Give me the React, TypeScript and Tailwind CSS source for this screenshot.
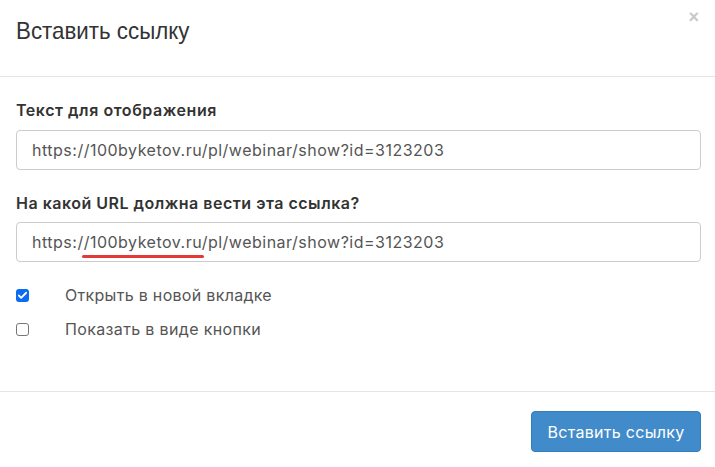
import { Check } from "lucide-react";

const url = "https://100byketov.ru/pl/webinar/show?id=3123203";

export default function App() {
  return (
    <div className="h-[467px] w-[715px] overflow-hidden bg-white text-[#333] [font-family:Inter,'Noto_Sans',sans-serif]">
      <header className="relative h-[77px] border-b border-[#e5e5e5] px-4 pt-[16px]">
        <h1 className="origin-left scale-x-[0.93] text-[24px] leading-[30px] text-[#333] [font-family:'Liberation_Sans',Arial,sans-serif]">
          Вставить ссылку
        </h1>
        <span className="absolute right-[16px] top-[8px] text-[18px] font-bold leading-none text-[#c8c8c8] [font-family:'Liberation_Sans',Arial,sans-serif]">
          ×
        </span>
      </header>

      <main className="h-[315px] border-b border-[#e5e5e5] px-4 pt-[22px]">
        <label className="block text-[16px] font-semibold leading-[22px] tracking-[0.55px] text-[#333]">
          Текст для отображения
        </label>
        <div className="mt-[9px] flex h-[40px] w-[685px] items-center rounded-[4px] border border-[#ccc] px-[15px] text-[16px] tracking-[0.5px] text-[#555]">
          {url}
        </div>

        <label className="mt-[22px] block text-[16px] font-semibold leading-[22px] tracking-[0.5px] text-[#333]">
          На какой URL должна вести эта ссылка?
        </label>
        <div className="mt-[8px] flex h-[40px] w-[685px] items-center rounded-[4px] border border-[#ccc] px-[15px] text-[16px] tracking-[0.5px] text-[#555]">
          <span>https:/</span>
          <span className="relative">
            /100byketov.ru/
            <span className="absolute bottom-[-4px] left-[-2px] right-[4px] h-[3px] rounded-full bg-[#e53935]" />
          </span>
          <span>pl/webinar/show?id=3123203</span>
        </div>

        <div className="mt-[24px] flex flex-col gap-[16px]">
          <div className="flex items-center">
            <span className="flex size-[13px] items-center justify-center rounded-[3px] bg-[#0b6cf0]">
              <Check className="size-[11px] text-white" strokeWidth={4} />
            </span>
            <span className="ml-[36px] text-[16px] leading-[18px] tracking-[0.3px] text-[#555]">Открыть в новой вкладке</span>
          </div>
          <div className="flex items-center">
            <span className="size-[13px] rounded-[3px] border border-[#767676] bg-white" />
            <span className="ml-[36px] text-[16px] leading-[18px] tracking-[0.35px] text-[#555]">Показать в виде кнопки</span>
          </div>
        </div>
      </main>

      <footer className="flex justify-end px-[14px] pt-[19px]">
        <button className="h-[41px] w-[170px] rounded-[4px] border border-[#357ebd] bg-[#428bca] text-[16px] tracking-[0.3px] text-white">
          Вставить ссылку
        </button>
      </footer>
    </div>
  );
}
